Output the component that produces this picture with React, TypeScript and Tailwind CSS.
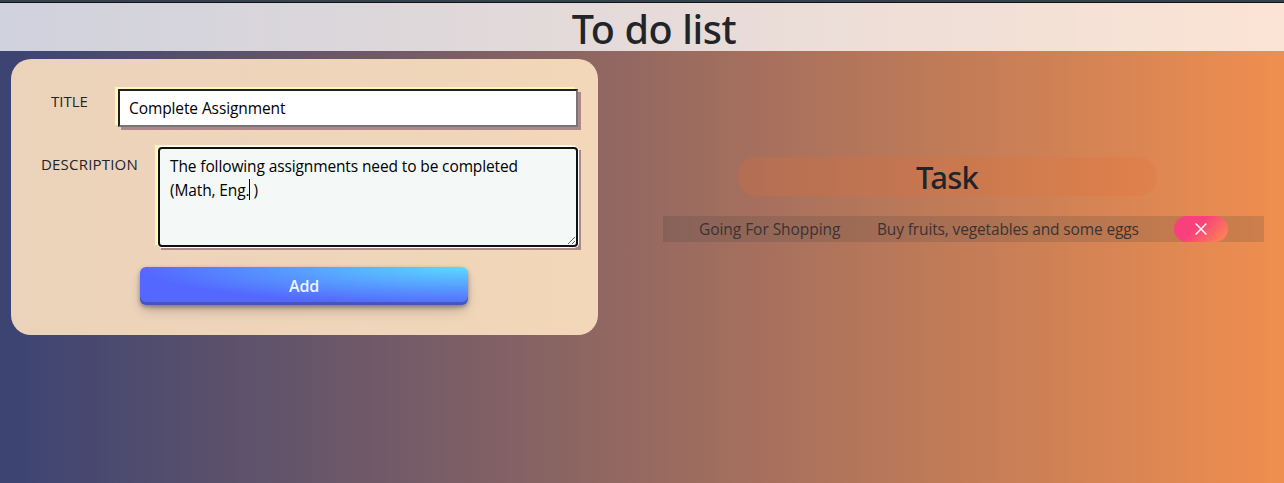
import React from "react";

function Field({
  label,
  labelClass,
  children,
}: {
  label: string;
  labelClass: string;
  children: React.ReactNode;
}) {
  return (
    <div className="flex items-start">
      <label className={`shrink-0 whitespace-nowrap text-[#212529] ${labelClass}`}>{label}</label>
      {children}
    </div>
  );
}

function TaskForm() {
  return (
    <form className="ml-[11px] mt-2 flex h-[276px] w-[587px] flex-col rounded-[20px] bg-[linear-gradient(to_right,#ebd3bb,#f2d7b8)] pt-[30px]">
      <Field label="TITLE" labelClass="ml-10 w-[67px] text-[15px] leading-6 tracking-[0px]">
        <input
          className="h-[38px] w-[460px] rounded-none border-2 border-t-[#212121] border-r-[#767676] border-b-[#767676] border-l-[#212121] bg-white px-[9px] text-[15.5px] tracking-[-0.1px] text-black shadow-[-3px_-2px_0_#fff5bd,3px_3px_0_#ad8888] outline-none"
          defaultValue="Complete Assignment"
        />
      </Field>
      <div className="mt-5">
        <Field label="DESCRIPTION" labelClass="ml-[30px] w-[117px] pt-[5px] text-[15px] leading-6 tracking-[0.2px]">
          <div className="relative h-[100px] w-[420px] shadow-[-3px_-2px_0_#fff5bd,3px_3px_0_#ad8888]">
            <textarea
              className="block h-[100px] w-[420px] resize rounded-[4px] border-2 border-[#101010] bg-[#f4f9f8] px-[10px] py-[5px] text-[15.5px] leading-6 tracking-[-0.12px] text-black shadow-[0_0_0_1px_#fff] outline-none"
              defaultValue={"The following assignments need to be completed\n(Math, Eng. )"}
            />
            <span className="absolute left-[91px] top-8 h-[21px] w-px bg-black" />
          </div>
        </Field>
      </div>
      <button
        type="button"
        className="ml-[129px] mt-5 h-[38px] w-[328px] rounded-[6px] bg-[radial-gradient(100%_100%_at_100%_0,#5adaff_0,#5468ff_100%)] text-[16px] font-semibold tracking-[-0.2px] text-[#f0f4ff] shadow-[0_2px_4px_rgba(45,35,66,0.4),0_7px_13px_-3px_rgba(45,35,66,0.3),inset_0_-3px_0_rgba(58,65,111,0.5)]"
      >
        Add
      </button>
    </form>
  );
}

function TaskList() {
  return (
    <section className="ml-[65px] flex w-[601px] flex-col pt-[106px]">
      <h2 className="ml-[74px] flex h-[39px] w-[420px] items-center justify-center rounded-[20px] bg-[#e86c30]/22 pt-[2px] font-['Noto_Sans',sans-serif] text-[31px] font-medium leading-none tracking-[-0.8px] text-[#212529]">
        Task
      </h2>
      <div className="mt-5 flex h-[26px] items-center bg-[#3c3c3c]/18 text-[15.5px] leading-6 text-[#393334]">
        <span className="ml-9 w-[178px] whitespace-nowrap tracking-[-0.05px]">Going For Shopping</span>
        <span className="w-[297px] whitespace-nowrap tracking-[-0.14px]">Buy fruits, vegetables and some eggs</span>
        <button
          type="button"
          aria-label="Delete task"
          className="flex h-[26px] w-[54px] items-center justify-center rounded-full bg-[linear-gradient(135deg,#f93f7c_40%,#fb8455_92%)]"
        >
          <svg width="12" height="12" viewBox="0 0 12 12" className="mb-px" fill="none" stroke="#fff" strokeWidth="1.4">
            <path d="M.6.6l10.8 10.8M11.4.6L.6 11.4" />
          </svg>
        </button>
      </div>
    </section>
  );
}

export default function App() {
  return (
    <div className="h-[483px] w-[1284px] overflow-hidden bg-[linear-gradient(to_right,#3d4472_1%,#ee8e4f_99%)] font-['Open_Sans','Noto_Sans',sans-serif]">
      <div className="h-[3px] border-b border-[#101418] bg-[#35414b]" />
      <header className="flex h-12 items-center justify-center bg-white/76 pl-6">
        <h1 className="pt-[5px] font-['Noto_Sans',sans-serif] text-[39.5px] font-medium leading-none tracking-[-0.4px] text-[#212529]">To do list</h1>
      </header>
      <main className="flex">
        <TaskForm />
        <TaskList />
      </main>
    </div>
  );
}
